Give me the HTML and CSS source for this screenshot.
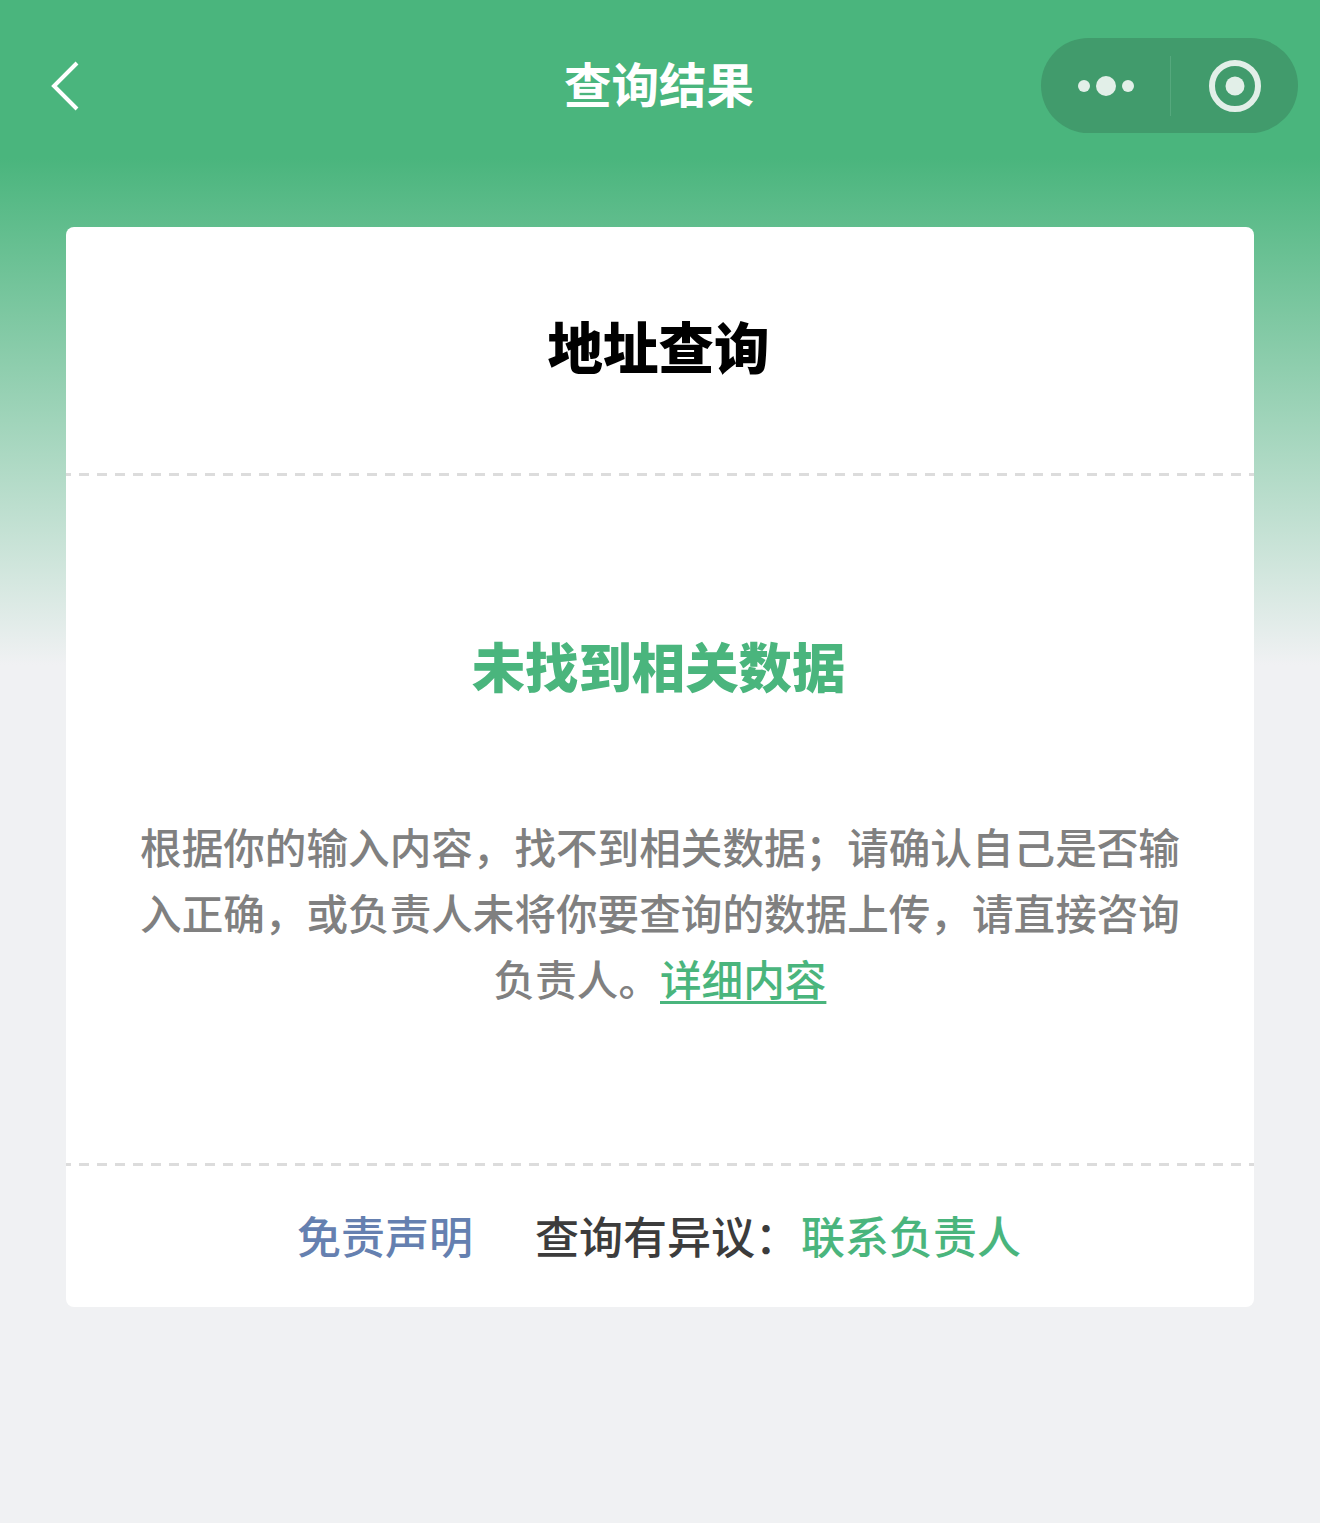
FILE: index.html
```html
<!DOCTYPE html>
<html lang="zh-CN">
<head>
    <meta charset="UTF-8">
    <meta name="viewport" content="width=device-width, initial-scale=1.0">
    <title>查询结果</title>
    <link rel="stylesheet" href="styles.css">
</head>

<body>
    <!-- 顶部导航 -->
    <header class="nav">
        <svg class="nav-back" width="28" height="50" viewBox="0 0 28 50">
            <path d="M26 2 L3 25 L26 48" fill="none" stroke="#fff" stroke-width="4"/>
        </svg>
        <h1 class="nav-title">查询结果</h1>
        <div class="capsule">
            <svg class="capsule-more" width="60" height="24" viewBox="0 0 60 24">
                <circle cx="8" cy="12" r="6" fill="#e2efe8"/>
                <circle cx="30" cy="12" r="10" fill="#e2efe8"/>
                <circle cx="52" cy="12" r="6" fill="#e2efe8"/>
            </svg>
            <span class="capsule-line"></span>
            <svg class="capsule-close" width="54" height="54" viewBox="0 0 54 54">
                <circle cx="27" cy="27" r="23" fill="none" stroke="#e2efe8" stroke-width="6"/>
                <circle cx="27" cy="27" r="9.5" fill="#e2efe8"/>
            </svg>
        </div>
    </header>

    <!-- 结果卡片 -->
    <main class="card">
        <h2 class="card-title">地址查询</h2>
        <div class="dash"></div>
        <section class="result">
            <h3 class="result-title">未找到相关数据</h3>
            <p class="result-text">根据你的输入内容，找不到相关数据；请确认自己是否输入正确，或负责人未将你要查询的数据上传，请直接咨询负责人。<a class="result-link" href="#">详细内容</a></p>
        </section>
        <div class="dash"></div>
        <footer class="card-foot">
            <a class="foot-note" href="#">免责声明</a>
            <span class="foot-ask">查询有异议：<a class="foot-contact" href="#">联系负责人</a></span>
        </footer>
    </main>
</body>
</html>
```

FILE: styles.css
```css
body {
    margin: 0;
    min-height: 1523px;
    background-color: #f0f1f3;
    background-image: linear-gradient(#4ab57d 0, #4ab57d 158px, #f0f1f3 665px);
    background-size: 100% 670px;
    background-repeat: no-repeat;
    font-family: "Noto Sans CJK SC", "Liberation Sans", sans-serif;
}

.nav {
    position: relative;
    height: 170px;
}

.nav-back {
    position: absolute;
    left: 51px;
    top: 61px;
}

.nav-title {
    margin: 0;
    padding-top: 49px;
    padding-right: 2px;
    text-align: center;
    color: #fff;
    font-size: 47.5px;
    line-height: 68px;
    font-weight: 700;
}

.capsule {
    position: absolute;
    left: 1041px;
    top: 38px;
    width: 257px;
    height: 95px;
    border-radius: 48px;
    background-color: #419b6c;
    display: flex;
    align-items: center;
}

.capsule-more {
    margin-left: 35px;
}

.capsule-line {
    width: 1px;
    height: 60px;
    margin-left: 34px;
    background-color: #55a87d;
}

.capsule-close {
    margin-left: 37px;
}

.card {
    margin: 57px 66px 0;
    height: 1080px;
    background-color: #fff;
    border-radius: 8px;
    display: flex;
    flex-direction: column;
}

.card-title {
    margin: 0;
    padding-right: 3px;
    height: 246px;
    line-height: 236px;
    text-align: center;
    color: #000;
    font-size: 55.5px;
    font-weight: 900;
}

/* 虚线: 10px 实线 + 8px 间隔, 左端留半截 */
.dash {
    height: 3px;
    flex: none;
    background-image: repeating-linear-gradient(90deg, #dcdcdc 0, #dcdcdc 10px, transparent 10px, transparent 18px);
    background-position: 13px 0;
}

.result {
    height: 687px;
    flex: none;
    padding: 0 74px;
    box-sizing: border-box;
}

.result-title {
    margin: 0;
    padding-top: 149px;
    padding-right: 3px;
    line-height: 80px;
    text-align: center;
    color: #4ab57d;
    font-size: 53.4px;
    font-weight: 900;
}

.result-text {
    margin: 0;
    padding-top: 108px;
    text-align: center;
    color: #808080;
    font-size: 41.6px;
    line-height: 66px;
    font-weight: 500;
}

.result-link {
    color: #4ab57d;
    text-decoration: underline;
    text-decoration-thickness: 3px;
    text-underline-offset: 5px;
}

.card-foot {
    flex: 1;
    display: flex;
    justify-content: center;
    align-items: center;
    gap: 62px;
    font-size: 44px;
    font-weight: 500;
    padding: 0 2px 4px 0;
}

.foot-note {
    color: #6580b0;
    text-decoration: none;
}

.foot-ask {
    color: #3c3c3c;
}

.foot-contact {
    margin-left: 2px;
    color: #4ab57d;
    text-decoration: none;
}
```
